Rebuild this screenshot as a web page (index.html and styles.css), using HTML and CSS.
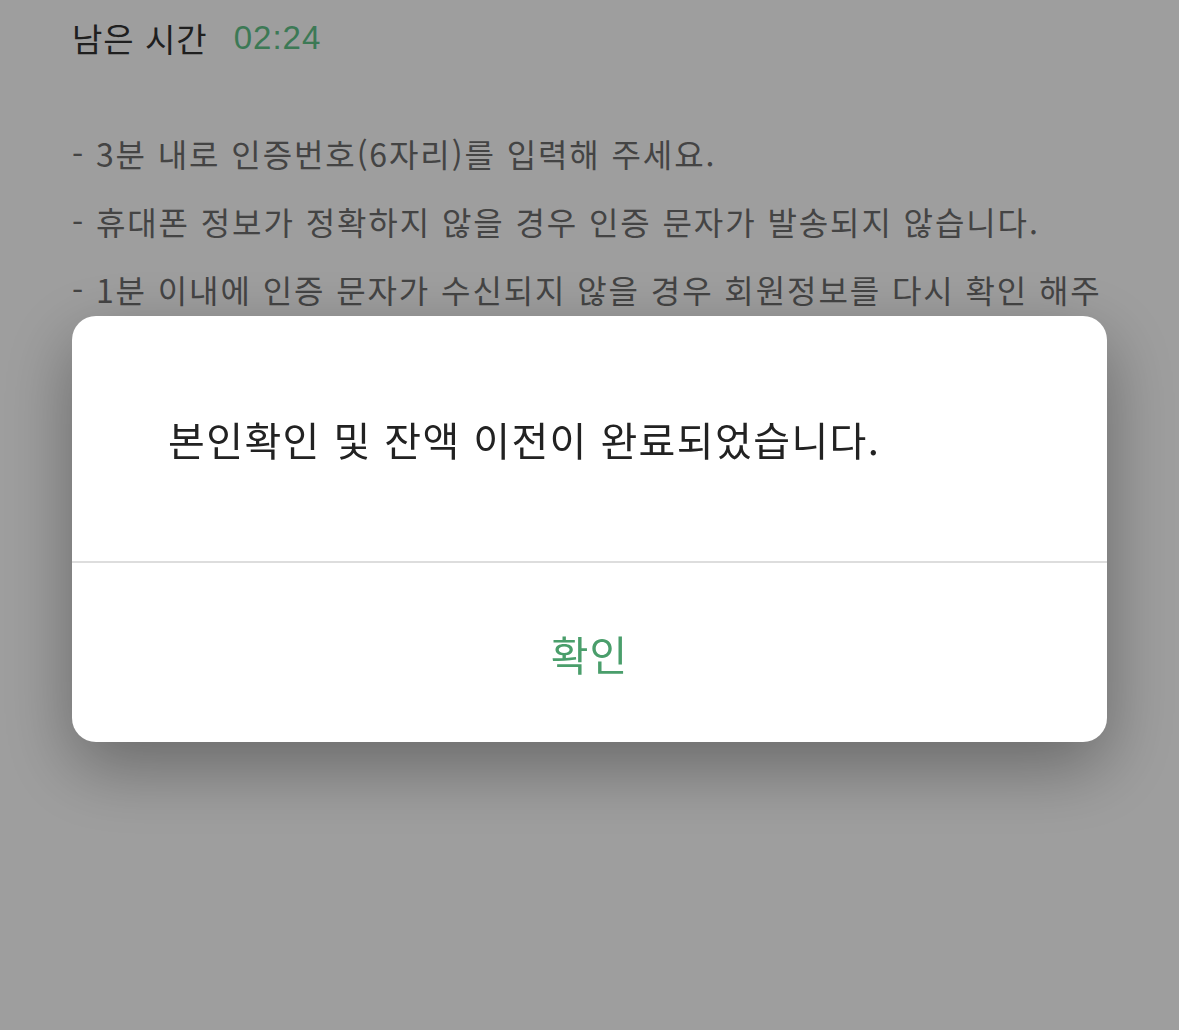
FILE: index.html
```html
<!DOCTYPE html>
<html lang="ko">
<head>
<meta charset="utf-8">
<link rel="stylesheet" href="styles.css">
</head>
<body>
<main class="page">
  <div class="timer">
    <span class="timer-label">남은 시간</span>
    <span class="timer-value">02:24</span>
  </div>
  <ul class="notes">
    <li>- 3분 내로 인증번호(6자리)를 입력해 주세요.</li>
    <li>- 휴대폰 정보가 정확하지 않을 경우 인증 문자가 발송되지 않습니다.</li>
    <li>- 1분 이내에 인증 문자가 수신되지 않을 경우 회원정보를 다시 확인 해주<br>세요.</li>
  </ul>
</main>
<div class="overlay">
  <div class="dialog">
    <p class="dialog-message">본인확인 및 잔액 이전이 완료되었습니다.</p>
    <button class="dialog-button">확인</button>
  </div>
</div>
</body>
</html>
```
FILE: styles.css
```css
html, body {
  margin: 0;
  padding: 0;
  background: #ffffff;
  font-family: "Noto Sans CJK KR", "Noto Sans", sans-serif;
}
.page {
  padding: 14px 72px 0;
}
.timer {
  display: flex;
  align-items: center;
  gap: 26px;
  height: 48px;
  font-size: 33px;
}
.timer-label {
  color: #333333;
  letter-spacing: 1px;
}
.timer-value {
  color: #62c48a;
  font-family: "Liberation Sans", sans-serif;
  font-size: 33px;
  letter-spacing: 1px;
}
.notes {
  list-style: none;
  margin: 57px 0 0;
  padding: 0;
  color: #6e6e6e;
  font-size: 32px;
  letter-spacing: 1.9px;
}
.notes li {
  height: 68px;
  line-height: 68px;
  white-space: nowrap;
}
.overlay {
  position: fixed;
  inset: 0;
  background: rgba(0, 0, 0, 0.38);
  padding: 316px 72px 0 72px;
}
.dialog {
  background: #ffffff;
  border-radius: 24px;
  box-shadow: 0 24px 70px rgba(0, 0, 0, 0.35);
  display: flex;
  flex-direction: column;
}
.dialog-message {
  margin: 0;
  height: 245px;
  display: flex;
  align-items: center;
  padding-left: 96px;
  font-size: 40px;
  color: #222222;
  letter-spacing: 1.4px;
  border-bottom: 2px solid #dddddd;
}
.dialog-button {
  height: 179px;
  border: none;
  background: transparent;
  font-family: inherit;
  font-size: 41px;
  color: #4a9e6b;
  padding: 0;
  letter-spacing: 1px;
  cursor: pointer;
}
```
